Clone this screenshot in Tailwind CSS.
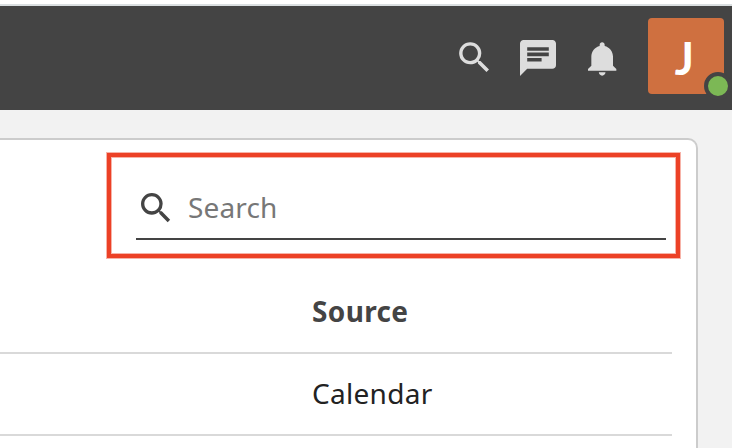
<!DOCTYPE html>
<html lang="en">
  <head>
    <meta charset="UTF-8" />
    <meta name="viewport" content="width=device-width, initial-scale=1.0" />
    <title>Sources</title>
    <script src="https://cdn.jsdelivr.net/npm/@tailwindcss/browser@4"></script>
  </head>
  <body class="h-screen overflow-hidden bg-[#f2f2f2] font-['Noto_Sans',sans-serif]">
    <!-- Top bar -->
    <header class="h-[110px] border-t-4 border-white bg-[#444]">
      <div class="flex h-full items-start justify-end border-t-2 border-[#dadfe1] pr-2">
        <button class="mt-[31px] mr-[25.5px]" aria-label="Search">
          <svg class="block size-[41px] fill-[#ddd]" viewBox="0 0 24 24">
            <path d="M15.5 14h-.79l-.28-.27A6.471 6.471 0 0 0 16 9.5 6.5 6.5 0 1 0 9.5 16c1.61 0 3.09-.59 4.23-1.57l.27.28v.79l5 4.99L20.49 19l-4.99-5zm-6 0C7.01 14 5 11.99 5 9.5S7.01 5 9.5 5 14 7.01 14 9.5 11.99 14 9.5 14z" />
          </svg>
        </button>
        <button class="mt-[34px] mr-[27px]" aria-label="Messages">
          <svg class="block size-9 fill-[#ddd]" viewBox="2 2 20 20">
            <path d="M20 2H4c-1.1 0-1.99.9-1.99 2L2 22l4-4h14c1.1 0 2-.9 2-2V4c0-1.1-.9-2-2-2zM6 9h12v2H6V9zm8 5H6v-2h8v2zm4-6H6V6h12v2z" />
          </svg>
        </button>
        <button class="mt-[33px] mr-[25px]" aria-label="Notifications">
          <svg class="block size-10 fill-[#ddd]" viewBox="0 0 24 24">
            <path d="M11.5 22c1.1 0 2-.9 2-2h-4c0 1.1.9 2 2 2zm6.5-6v-5.5c0-3.07-2.13-5.64-5-6.32V3.5c0-.83-.67-1.5-1.5-1.5S10 2.67 10 3.5v.68c-2.87.68-5 3.25-5 6.32V16l-2 2v1h17v-1l-2-2z" />
          </svg>
        </button>
        <div class="relative mt-3 flex size-[76px] items-center justify-center rounded bg-[#cf7040] pt-[5px] pr-[3px]">
          <span class="font-[Lato,sans-serif] text-[45px] leading-none font-bold text-white">J</span>
          <span class="absolute -right-2 -bottom-1.5 size-7 rounded-full border-4 border-[#444] bg-[#7cb855]"></span>
        </div>
      </div>
    </header>

    <main class="pt-7 pr-[34px]">
      <section class="h-[310px] rounded-tr-[10px] border-t-2 border-r-2 border-[#ccc] bg-white pt-[13px] pr-4">
        <!-- Search field -->
        <div class="ml-[107px] h-[105px] w-[573px] border-4 border-[#ec4126] pt-[23px] pl-[25px] ring-1 ring-[#ec4126]/40 inset-ring-1 inset-ring-[#ec4126]/40">
          <label class="flex h-[60px] w-[530px] items-start border-b-2 border-[#444] pt-2">
            <svg class="block size-10 shrink-0 fill-[#444]" viewBox="0 0 24 24">
              <path d="M15.5 14h-.79l-.28-.27A6.471 6.471 0 0 0 16 9.5 6.5 6.5 0 1 0 9.5 16c1.61 0 3.09-.59 4.23-1.57l.27.28v.79l5 4.99L20.49 19l-4.99-5zm-6 0C7.01 14 5 11.99 5 9.5S7.01 5 9.5 5 14 7.01 14 9.5 11.99 14 9.5 14z" />
            </svg>
            <input
              type="text"
              placeholder="Search"
              class="-mt-px ml-3 h-10 min-w-0 flex-1 text-[28px] tracking-[0.15px] outline-none placeholder:text-[#777]"
            />
          </label>
        </div>

        <!-- Source table -->
        <div class="w-[672px]">
          <div class="flex h-24 items-end border-b-2 border-[#d9d9d9] pb-5 pl-[312px] text-[28px] font-bold tracking-[0.35px] text-[#444]">
            <span>Source</span>
          </div>
          <div class="flex h-[82px] items-center border-b-2 border-[#d9d9d9] pb-0.5 pl-[312px] text-[28px] tracking-[0.3px] text-[#222]">
            <span>Calendar</span>
          </div>
        </div>
      </section>
    </main>
  </body>
</html>
